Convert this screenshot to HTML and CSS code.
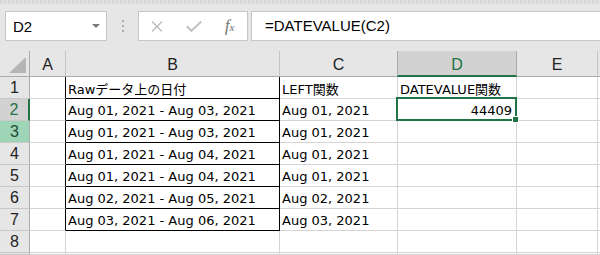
FILE: index.html
```html
<!DOCTYPE html>
<html lang="ja">
<head>
    <meta charset="UTF-8">
    <title>DATEVALUE</title>
    <link rel="stylesheet" href="styles.css">
</head>
<body>
    <div class="app">
        <div class="ribbon-edge"></div>
        <div class="formula-row">
            <div class="name-box">
                <span>D2</span>
                <span class="drop"></span>
            </div>
            <div class="grip"><i></i><i></i><i></i></div>
            <div class="fx-buttons">
                <svg class="btn cancel" width="12" height="11" viewBox="0 0 12 11">
                    <path d="M1 0.5 L11 10.5 M11 0.5 L1 10.5" stroke="#bdbdbd" stroke-width="1.4" fill="none"/>
                </svg>
                <svg class="btn ok" width="16" height="11" viewBox="0 0 16 11">
                    <path d="M0.8 5.2 L5.5 9.8 L15.2 0.6" stroke="#c2c2c2" stroke-width="2" fill="none"/>
                </svg>
                <span class="fx">f<small>x</small></span>
            </div>
            <div class="formula">=DATEVALUE(C2)</div>
        </div>

        <div class="sheet">
            <!-- header row -->
            <div class="corner"><span class="tri"></span></div>
            <div class="hd">A</div>
            <div class="hd">B</div>
            <div class="hd">C</div>
            <div class="hd active">D</div>
            <div class="hd">E</div>
            <div class="hd last"></div>

            <div class="rh">1</div>
            <div class="c edge"></div>
            <div class="c box">Rawデータ上の日付</div>
            <div class="c">LEFT関数</div>
            <div class="c">DATEVALUE関数</div>
            <div class="c"></div>
            <div class="c last"></div>

            <div class="rh active">2</div>
            <div class="c edge"></div>
            <div class="c box">Aug 01, 2021 - Aug 03, 2021</div>
            <div class="c">Aug 01, 2021</div>
            <div class="c num">44409<div class="sel"><span class="handle"></span></div></div>
            <div class="c"></div>
            <div class="c last"></div>

            <div class="rh hover">3</div>
            <div class="c edge"></div>
            <div class="c box">Aug 01, 2021 - Aug 03, 2021</div>
            <div class="c">Aug 01, 2021</div>
            <div class="c"></div>
            <div class="c"></div>
            <div class="c last"></div>

            <div class="rh">4</div>
            <div class="c edge"></div>
            <div class="c box">Aug 01, 2021 - Aug 04, 2021</div>
            <div class="c">Aug 01, 2021</div>
            <div class="c"></div>
            <div class="c"></div>
            <div class="c last"></div>

            <div class="rh">5</div>
            <div class="c edge"></div>
            <div class="c box">Aug 01, 2021 - Aug 04, 2021</div>
            <div class="c">Aug 01, 2021</div>
            <div class="c"></div>
            <div class="c"></div>
            <div class="c last"></div>

            <div class="rh">6</div>
            <div class="c edge"></div>
            <div class="c box">Aug 02, 2021 - Aug 05, 2021</div>
            <div class="c">Aug 02, 2021</div>
            <div class="c"></div>
            <div class="c"></div>
            <div class="c last"></div>

            <div class="rh">7</div>
            <div class="c edge"></div>
            <div class="c box">Aug 03, 2021 - Aug 06, 2021</div>
            <div class="c">Aug 03, 2021</div>
            <div class="c"></div>
            <div class="c"></div>
            <div class="c last"></div>

            <div class="rh">8</div>
            <div class="c"></div>
            <div class="c"></div>
            <div class="c"></div>
            <div class="c"></div>
            <div class="c"></div>
            <div class="c last"></div>

            <div class="rh"></div>
            <div class="c"></div>
            <div class="c"></div>
            <div class="c"></div>
            <div class="c"></div>
            <div class="c"></div>
            <div class="c last"></div>
        </div>
    </div>
</body>
</html>
```

FILE: styles.css
```css
html, body {
    margin: 0;
    padding: 0;
}
body {
    width: 600px;
    height: 255px;
    overflow: hidden;
    background-color: #fff;
    font-family: 'Liberation Sans', Arial, sans-serif;
    color: #000;
}
.app {
    width: 600px;
    height: 255px;
    display: flex;
    flex-direction: column;
    overflow: hidden;
}

/* --- formula bar --- */
.ribbon-edge {
    height: 4px;
    background: repeating-linear-gradient(90deg, #d6d6d6 0 2px, #e2e2e2 2px 4px);
}
.formula-row {
    height: 47px;
    box-sizing: border-box;
    padding: 7px 0 0 5px;
    background-color: #e6e6e6;
    display: flex;
    align-items: flex-start;
}
.name-box {
    width: 102px;
    height: 30px;
    box-sizing: border-box;
    background-color: #fff;
    border: 1px solid #c6c6c6;
    display: flex;
    align-items: center;
    justify-content: space-between;
    padding: 1px 6px 0 7px;
    font-size: 15px;
}
.drop {
    width: 0;
    height: 0;
    border-left: 4px solid transparent;
    border-right: 4px solid transparent;
    border-top: 4px solid #7a7a7a;
    margin-top: -2px;
}
.grip {
    width: 31px;
    height: 30px;
    display: flex;
    flex-direction: column;
    align-items: center;
    justify-content: center;
    gap: 3px;
}
.grip i {
    width: 2px;
    height: 2px;
    background-color: #ababab;
}
.fx-buttons {
    width: 110px;
    height: 30px;
    box-sizing: border-box;
    background-color: #fff;
    border: 1px solid #c6c6c6;
    display: flex;
    align-items: center;
    padding: 1px 0 0 12px;
}
.btn {
    display: block;
    flex: none;
}
.ok {
    margin-left: 23px;
}
.fx {
    margin-left: 23px;
    margin-top: -2px;
    font-family: 'Liberation Serif', 'Times New Roman', serif;
    font-style: italic;
    font-size: 16px;
    color: #6e6e6e;
}
.fx small {
    font-size: 11px;
}
.formula {
    flex: 1;
    height: 30px;
    margin-left: 3px;
    box-sizing: border-box;
    background-color: #fff;
    border: 1px solid #c6c6c6;
    border-right: none;
    padding: 5px 0 0 13px;
    font-size: 15px;
}

/* --- grid --- */
.sheet {
    flex: 1;
    display: grid;
    grid-template-columns: 30px 36px 214px 118px 119px 81px 1fr;
    grid-template-rows: 26px repeat(8, 22px) 1fr;
    font-family: 'DejaVu Sans', Verdana, 'Noto Sans CJK JP', sans-serif;
    font-size: 13px;
}
.sheet > div {
    box-sizing: border-box;
}
.corner {
    background-color: #e6e6e6;
    border-right: 1px solid #ababab;
    border-bottom: 1px solid #ababab;
    position: relative;
}
.tri {
    position: absolute;
    right: 3px;
    bottom: 3px;
    width: 0;
    height: 0;
    border-left: 17px solid transparent;
    border-bottom: 16px solid #b5b5b5;
}
.hd {
    background-color: #e6e6e6;
    border-right: 1px solid #c4c4c4;
    border-bottom: 1px solid #ababab;
    display: flex;
    justify-content: center;
    align-items: center;
    padding-top: 3px;
    font-family: 'Liberation Sans', Arial, sans-serif;
    font-size: 16px;
    color: #222;
}
.hd.active {
    background-color: #d2d2d2;
    border-bottom: 2px solid #217346;
    border-left: 1px solid #ababab;
    margin-left: -1px;
    border-right-color: #ababab;
    color: #217346;
}
.hd.last {
    border-right: none;
}
.rh {
    background-color: #e6e6e6;
    border-right: 1px solid #ababab;
    border-bottom: 1px solid #c8c8c8;
    display: flex;
    justify-content: center;
    align-items: center;
    padding-top: 1px;
    font-family: 'Liberation Sans', Arial, sans-serif;
    font-size: 16px;
    color: #222;
}
.rh.active {
    background-color: #d2d2d2;
    border-right: 2px solid #217346;
    color: #217346;
}
.rh.hover {
    background-color: #9fd5b7;
    color: #1e4d33;
}
.c {
    border-right: 1px solid #d4d4d4;
    border-bottom: 1px solid #d4d4d4;
    display: flex;
    align-items: center;
    padding: 1px 3px 0 2px;
    white-space: nowrap;
}
.c.last {
    border-right: none;
}
.c.edge {
    border-right-color: #000;
}
.c.box {
    border-right-color: #000;
    border-bottom-color: #000;
}
.c.num {
    justify-content: flex-end;
    position: relative;
    padding-right: 4px;
}
.sel {
    position: absolute;
    left: -2px;
    top: -2px;
    right: -1px;
    bottom: -1px;
    border: 2px solid #217346;
}
.handle {
    position: absolute;
    right: -4px;
    bottom: -4px;
    width: 5px;
    height: 5px;
    background-color: #217346;
    border: 1px solid #fff;
}
```
